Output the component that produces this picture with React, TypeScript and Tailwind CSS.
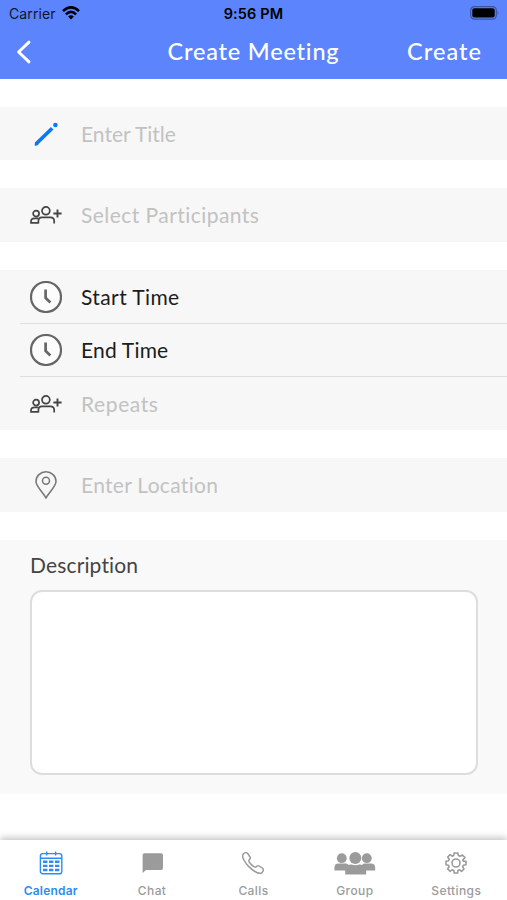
import React, { useState } from 'react'

type IconProps = { className?: string }

const PencilIcon = () => (
  <svg className="w-6 h-6" viewBox="0 0 24 24" fill="#0a78f5">
    <path d="M2.2 21.8 18.2 6.2" stroke="#0a78f5" strokeWidth="3.7" />
    <path d="M1.4 23 1.6 20.6 3.6 22.6Z" stroke="#0a78f5" strokeWidth="1.4" strokeLinejoin="round" />
    <circle cx="21.4" cy="3" r="2.3" />
  </svg>
)

const AddPeopleIcon = () => (
  <svg className="w-8 h-[18px]" viewBox="0 0 32 18" fill="none" stroke="#444" strokeWidth="1.7">
    <circle cx="15.9" cy="4.8" r="3.9" />
    <circle cx="6.1" cy="7.6" r="3" />
    <path d="M8.4 17.6V15.1Q8.4 11.4 12 11.4H20.4Q24.2 11.4 24.2 15.1V17.6" />
    <path d="M8.4 12.4H4.7Q1 12.4 1 15.6V16.9H8.4" />
    <path d="M27.5 3.4V11.6M23.4 7.5H31.6" strokeWidth="1.9" />
  </svg>
)

const ClockIcon = () => (
  <svg className="w-8 h-8" viewBox="0 0 32 32" fill="#fcfcfc" stroke="#666">
    <circle cx="16" cy="16" r="15" strokeWidth="2.2" />
    <path d="M15.6 8.6V17L20.4 21.4" fill="none" strokeWidth="2.7" />
  </svg>
)

const PinIcon = () => (
  <svg className="w-[22px] h-7" viewBox="0 0 22 28" fill="none" stroke="#777" strokeWidth="1.5">
    <path d="M11 27C8.6 22 1 15.3 1 10.4A10 9.6 0 0 1 21 10.4C21 15.3 13.4 22 11 27Z" />
    <circle cx="11" cy="9.7" r="3.5" />
  </svg>
)

const CalendarIcon = ({ className }: IconProps) => (
  <svg className={className} width="24" height="24" viewBox="0 0 24 24" fill="none" stroke="currentColor" strokeWidth="1.4">
    <rect x="1.4" y="2.6" width="21.4" height="20.2" rx="2.4" />
    <path d="M1.4 7.3H22.8M7.7 0.6V4.6M16.6 0.6V4.6" />
    <path d="M4 10.8H8.4M10 10.8H14.4M16 10.8H20.4M4 14.9H8.4M10 14.9H14.4M16 14.9H20.4M4 19H8.4M10 19H14.4M16 19H20.4" strokeWidth="2.4" />
  </svg>
)

const ChatIcon = ({ className }: IconProps) => (
  <svg className={className} width="21" height="20" viewBox="0 0 21 20" fill="currentColor">
    <path d="M2.4 0.3H19Q21 0.3 21 2.3V15Q21 17 19 17H4L0.6 20V2.3Q0.6 0.3 2.4 0.3Z" />
  </svg>
)

const PhoneIcon = ({ className }: IconProps) => (
  <svg className={className} width="22" height="22" viewBox="0 0 22 22" fill="none" stroke="currentColor" strokeWidth="1.5" strokeLinejoin="round">
    <path d="M1.4 1.9C3.2 0.3 4.8 0.2 5.8 1.6L8 5C8.8 6.2 8.2 7.2 7 8.2C6.2 9 7.8 11 9.4 12.6C11 14.2 13 15.8 13.8 15C14.8 13.8 15.8 13.2 17 14L20.4 16.2C21.8 17.2 21.7 18.8 20.1 20.6C17.6 23 11.4 19.2 7.1 14.9C2.8 10.6-1 4.4 1.4 1.9Z" />
  </svg>
)

const GroupIcon = ({ className }: IconProps) => (
  <svg className={className} width="42" height="23" viewBox="0 0 42 23" fill="currentColor">
    <circle cx="7.8" cy="6.2" r="4.9" />
    <circle cx="32.8" cy="6.2" r="4.9" />
    <circle cx="21.3" cy="6" r="6" />
    <path d="M0.4 18.4V16Q0.4 11.6 4.8 11.6H11.6Q13.4 11.6 14.6 13Q15.6 12.2 17.2 12.6Q21.4 14 25.4 12.6Q27 12.2 28 13Q29.2 11.6 31 11.6H37Q41.2 11.6 41.2 16V18.4H32.2V22.4H11.2V18.4Z" />
  </svg>
)

const GearIcon = ({ className }: IconProps) => (
  <svg className={className} width="22" height="22" viewBox="0 0 22 22" fill="none" stroke="currentColor" strokeWidth="1.6" strokeLinejoin="round">
    <path d="M9.2 1H12.8L13.4 3.5L15.2 4.3L17.4 3L20 5.6L17.7 8L18.3 9.1L21 9.3V12.8L18.3 13.2L17.7 14.8L19 17L16.6 19.4L14.6 17.8L13 18.5L12.6 21H9.3L8.8 18.5L7.1 17.8L5 19.3L2.6 16.9L4.1 14.8L3.5 13.2L1 12.8V9.3L3.5 8.8L4.2 7.2L2.7 5L5.1 2.7L7.2 4.2L8.7 3.5Z" />
    <circle cx="11" cy="11" r="4" />
  </svg>
)

const StatusBar = () => (
  <div className="flex h-[27px] items-center px-[9px] font-['Inter',sans-serif] text-[#10162c]">
    <div className="flex flex-1 items-center gap-[6px]">
      <span className="text-[14px] tracking-[0.1px]">Carrier</span>
      <svg className="w-[18px] h-[14px] -mt-[2px]" viewBox="0 0 18 14" fill="none" stroke="#000" strokeWidth="2.5">
        <path d="M1 5.2Q9-2.4 17 5.2M3.9 8.4Q9 3.4 14.1 8.4" />
        <path d="M6.1 10.5Q9 8 11.9 10.5L9 13.6Z" fill="#000" stroke="none" />
      </svg>
    </div>
    <span className="mt-px font-semibold text-black text-[14.5px] tracking-[0.15px]">9:56 PM</span>
    <div className="flex flex-1 justify-end -mt-px">
      <svg className="w-[30px] h-[14px] -mr-[2px]" viewBox="0 0 30 14">
        <rect x="0.7" y="0.7" width="25.6" height="12.4" rx="3.6" fill="none" stroke="#3c549f" strokeWidth="1.2" />
        <rect x="2.3" y="2.3" width="22.4" height="9.2" rx="2" fill="#000" />
        <path d="M27.6 4.7Q29.4 6.9 27.6 9.1Z" fill="#3c549f" />
      </svg>
    </div>
  </div>
)

const Header = () => (
  <header className="h-[79px] bg-[#5c84fd] shrink-0">
    <StatusBar />
    <div className="grid h-[50px] grid-cols-[1fr_auto_1fr] items-center px-4 text-[23.5px] font-medium text-white">
      <button aria-label="Back" className="w-4">
        <svg className="w-4 h-6" viewBox="0 0 16 24" fill="none" stroke="#fff" strokeWidth="3" strokeLinecap="round" strokeLinejoin="round">
          <path d="M13 2.2 2.6 12 13 21.8" />
        </svg>
      </button>
      <h1 className="tracking-[0.8px]">Create Meeting</h1>
      <button className="pr-[9px] text-right tracking-[1.05px]">Create</button>
    </div>
  </header>
)

type RowProps = {
  icon: React.ReactNode
  label: string
  labelClass: string
}

const Row = ({ icon, label, labelClass }: RowProps) => (
  <div className="flex h-[53px] items-center">
    <div className="ml-[30px] flex w-8 justify-center">{icon}</div>
    <span className={`ml-[19px] whitespace-nowrap text-[21px] ${labelClass}`}>{label}</span>
  </div>
)

const tabs = [
  { label: 'Calendar', icon: CalendarIcon },
  { label: 'Chat', icon: ChatIcon },
  { label: 'Calls', icon: PhoneIcon },
  { label: 'Group', icon: GroupIcon },
  { label: 'Settings', icon: GearIcon },
]

const TabBar = () => {
  const [active, setActive] = useState('Calendar')

  return (
    <nav className="grid h-[60px] shrink-0 grid-cols-5 bg-white shadow-[0_-2px_7px_rgba(0,0,0,0.25)] font-['Inter',sans-serif]">
      {tabs.map(({ label, icon: Icon }) => (
        <button
          key={label}
          onClick={() => setActive(label)}
          className={`flex flex-col items-center ${active === label ? 'text-[#2d8bf5] font-semibold tracking-[0.2px]' : 'text-[#9b9b9b] font-medium tracking-[0.4px]'}`}
        >
          <span className="flex h-[46px] items-center">
            <Icon />
          </span>
          <span className="-mt-[3px] text-[12px] leading-4">{label}</span>
        </button>
      ))}
    </nav>
  )
}

const App = () => {
  return (
    <div className="flex h-[900px] w-[507px] flex-col overflow-hidden bg-white font-['Lato',sans-serif] [font-variant-ligatures:none]">
      <Header />

      <main className="flex flex-1 flex-col gap-7 pt-7">
        <section className="bg-[#f7f7f7]">
          <Row icon={<PencilIcon />} label="Enter Title" labelClass="text-[#c2c2c2]" />
        </section>

        <section className="bg-[#f7f7f7] pb-px">
          <Row icon={<AddPeopleIcon />} label="Select Participants" labelClass="text-[#c2c2c2] tracking-[0.45px]" />
        </section>

        <section className="bg-[#f7f7f7]">
          <Row icon={<ClockIcon />} label="Start Time" labelClass="text-[#1c1c1c] tracking-[0.4px]" />
          <div className="ml-5 h-px bg-[#dedede]" />
          <div className="-mt-px pb-px">
            <Row icon={<ClockIcon />} label="End Time" labelClass="text-[#1c1c1c] tracking-[0.2px]" />
          </div>
          <div className="ml-5 -mt-px h-px bg-[#dedede]" />
          <Row icon={<AddPeopleIcon />} label="Repeats" labelClass="text-[#c2c2c2] tracking-[0.6px]" />
        </section>

        <section className="bg-[#f7f7f7] pb-px">
          <Row icon={<PinIcon />} label="Enter Location" labelClass="text-[#c2c2c2] tracking-[0.3px]" />
        </section>

        <section className="h-[254px] bg-[#f9f9f9] pl-[30px] pr-[29px] pt-[10px]">
          <label htmlFor="description" className="block h-[40px] text-[21px] leading-[30px] tracking-[0.15px] text-[#444]">Description</label>
          <textarea
            id="description"
            className="block h-[185px] w-full resize-none rounded-[12px] border-2 border-[#dddddd] bg-white p-3 outline-none"
          />
        </section>
      </main>

      <TabBar />
    </div>
  )
}

export default App
